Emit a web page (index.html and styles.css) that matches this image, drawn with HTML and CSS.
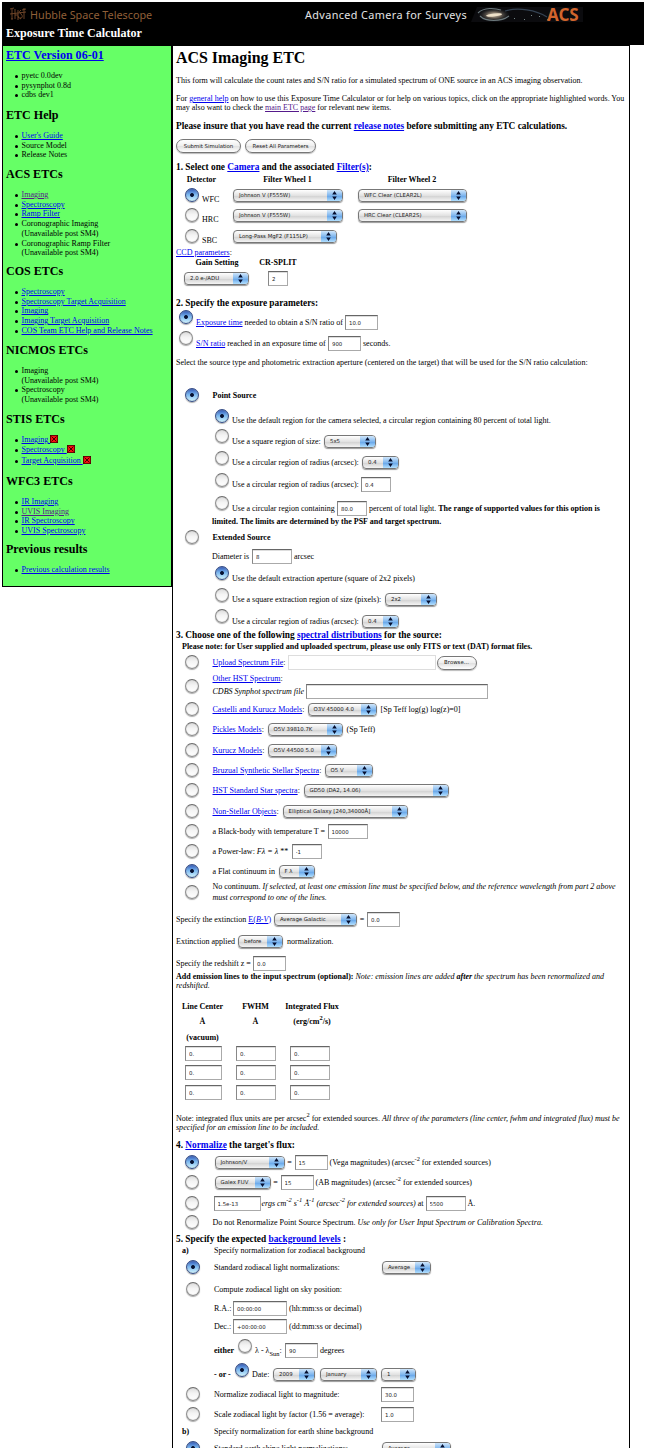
FILE: index.html
```html
<!DOCTYPE html>
<html lang="en">
<head>
<meta charset="utf-8">
<title>ACS Imaging ETC</title>
<link rel="stylesheet" href="styles.css">
</head>
<body>
<svg class="defs" width="0" height="0">
  <symbol id="arrows" viewBox="0 0 15 11"><path d="M7.5 1 9.8 4.4H5.2ZM7.5 10 9.8 6.6H5.2Z" fill="#061030"/></symbol>
  <symbol id="cross" viewBox="0 0 8 8"><path d="M0 0H8V8H0Z" fill="#300"/><path d="M.7.7H7.3V7.3H.7Z" fill="#f01010"/><path d="M1.5 1.5 6.5 6.5M6.5 1.5 1.5 6.5" stroke="#300" stroke-width=".9"/></symbol>
</svg>
<header class="top">
  <div class="brand">
    <svg class="hst" viewBox="0 0 18 15"><path d="M1 2 5 1M3 2V12M1 7 17 5M6 2V12M9 3V13M6 8H9M12 11Q9 12 9 9M12 3Q9 4 12 7T11 12M15 1V12M13 3 17 2M2 12H4" fill="none" stroke="#76492a" stroke-width=".9"/></svg>
    <span class="hubble">Hubble Space Telescope</span>
    <span class="camera">Advanced Camera for Surveys</span>
    <svg class="galaxy" viewBox="0 0 112 17">
      <defs><radialGradient id="core"><stop offset="0" stop-color="#fff8e8"/><stop offset=".35" stop-color="#c0ac94"/><stop offset="1" stop-color="#333b40" stop-opacity="0"/></radialGradient></defs>
      <path d="M6 1H112V16H0Z" fill="#0b0b0e"/>
      <ellipse cx="23" cy="9" rx="16" ry="7" fill="url(#core)" opacity=".65"/>
      <path d="M7 7C13 1 24 2 30 4M38 10C30 16 15 16 9 10" fill="none" stroke="#7f9094" stroke-width="1.1" opacity=".8"/>
      <ellipse cx="23" cy="9" rx="8" ry="1.6" fill="#eee0c8" transform="rotate(-6 23 9)"/>
      <path d="M34 5C47 1 65 4 76 11" fill="none" stroke="#344252" stroke-width="1.2"/>
      <path d="M43 12h1v1h-1zM53 13h1v1h-1zM60 9h1v1h-1zM68 10h1v1h-1zM76 13h1v1h-1z" fill="#788"/>
    </svg>
    <span class="acs">ACS</span>
  </div>
  <div class="calc">Exposure Time Calculator</div>
</header>
<div class="page">
<nav class="side">
  <section class="s60"><h2><a href="#">ETC Version 06-01</a></h2><ul><li>pyetc 0.0dev</li><li>pysynphot 0.8d</li><li>cdbs dev1</li></ul></section>
  <section class="s59"><h2>ETC Help</h2><ul><li><a href="#">User's Guide</a></li><li>Source Model</li><li>Release Notes</li></ul></section>
  <section class="s97"><h2>ACS ETCs</h2><ul><li><a class="seen" href="#">Imaging</a></li><li><a href="#">Spectroscopy</a></li><li><a href="#">Ramp Filter</a></li><li>Coronographic Imaging<br>(Unavailable post SM4)</li><li>Coronographic Ramp Filter<br>(Unavailable post SM4)</li></ul></section>
  <section class="s79"><h2>COS ETCs</h2><ul><li><a href="#">Spectroscopy</a></li><li><a href="#">Spectroscopy Target Acquisition</a></li><li><a href="#">Imaging</a></li><li><a href="#">Imaging Target Acquisition</a></li><li><a href="#">COS Team ETC Help and Release Notes</a></li></ul></section>
  <section class="s69"><h2>NICMOS ETCs</h2><ul><li>Imaging<br>(Unavailable post SM4)</li><li>Spectroscopy<br>(Unavailable post SM4)</li></ul></section>
  <section class="s62"><h2>STIS ETCs</h2><ul class="loose"><li><a href="#">Imaging <svg class="x"><use href="#cross"/></svg></a></li><li><a href="#">Spectroscopy <svg class="x"><use href="#cross"/></svg></a></li><li><a href="#">Target Acquisition <svg class="x"><use href="#cross"/></svg></a></li></ul></section>
  <section class="s68"><h2>WFC3 ETCs</h2><ul><li><a href="#">IR Imaging</a></li><li><a class="seen" href="#">UVIS Imaging</a></li><li><a href="#">IR Spectroscopy</a></li><li><a href="#">UVIS Spectroscopy</a></li></ul></section>
  <section class="s44"><h2>Previous results</h2><ul><li><a href="#">Previous calculation results</a></li></ul></section>
</nav>
<main class="main">
  <h1>ACS Imaging ETC</h1>
  <div class="row h20">This form will calculate the count rates and S/N ratio for a simulated spectrum of ONE source in an ACS imaging observation.</div>
  <div class="row h26"><p>For <a href="#">general help</a> on how to use this Exposure Time Calculator or for help on various topics, click on the appropriate highlighted words. You<br>may also want to check the <a class="seen" href="#">main ETC page</a> for relevant new items.</p></div>
  <div class="row h20 big"><p>Please insure that you have read the current <a href="#">release notes</a> before submitting any ETC calculations.</p></div>
  <div class="row h20 g4b"><button class="w65">Submit Simulation</button><button class="w71 ml4">Reset All Parameters</button></div>
  <div class="row h14 big"><p>1. Select one <a href="#">Camera</a> and the associated <a href="#">Filter(s)</a>:</p></div>
  <div class="row h10 th"><span class="w51 c">Detector</span><span class="ml5 w111 c">Filter Wheel 1</span><span class="ml14 w110 c">Filter Wheel 2</span></div>
  <div class="row h22"><input type="radio" class="det" checked><span class="w31 low">WFC</span><span class="sel w110">Johnson V (F555W)<svg><use href="#arrows"/></svg></span><span class="sel w109 ml15">WFC Clear (CLEAR2L)<svg><use href="#arrows"/></svg></span></div>
  <div class="row h19"><input type="radio" class="det"><span class="w31 low">HRC</span><span class="sel w110">Johnson V (F555W)<svg><use href="#arrows"/></svg></span><span class="sel w109 ml15">HRC Clear (CLEAR2S)<svg><use href="#arrows"/></svg></span></div>
  <div class="row h22"><input type="radio" class="det"><span class="w31 low">SBC</span><span class="sel w104">Long-Pass MgF2 (F115LP)<svg><use href="#arrows"/></svg></span></div>
  <div class="row h10"><a href="#">CCD parameters</a>:</div>
  <div class="row h10 th"><span class="w82 c">Gain Setting</span><span class="w40 c">CR-SPLIT</span></div>
  <div class="row h22"><span class="sel w65 ml8">2.0 e-/ADU<svg><use href="#arrows"/></svg></span><input class="w20 ml19" value="2"></div>
  <div class="row h12 g8 big">2. Specify the exposure parameters:</div>
  <div class="row h26"><input type="radio" class="in" checked><span class="w149"><a href="#">Exposure time</a> needed to obtain a S/N ratio of</span><input class="w33" value="10.0"></div>
  <div class="row h16"><input type="radio" class="in"><span class="w132"><a href="#">S/N ratio</a> reached in an exposure time of</span><input class="w33" value="900"><span class="ml2">seconds.</span></div>
  <div class="row h23">Select the source type and photometric extraction aperture (centered on the target) that will be used for the S/N ratio calculation:</div>
  <div class="row h21 g11"><input type="radio" class="out" checked><b>Point Source</b></div>
  <div class="nest g4">
    <div class="row h21"><input type="radio" class="in" checked>Use the default region for the camera selected, a circular region containing 80 percent of total light.</div>
    <div class="row h20"><input type="radio" class="in"><span class="w92">Use a square region of size:</span><span class="sel w52">5x5<svg><use href="#arrows"/></svg></span></div>
    <div class="row h23"><input type="radio" class="in"><span class="w130">Use a circular region of radius (arcsec):</span><span class="sel w37">0.4<svg><use href="#arrows"/></svg></span></div>
    <div class="row h21"><input type="radio" class="in"><span class="w129">Use a circular region of radius (arcsec):</span><input class="w30" value="0.4"></div>
    <div class="row h18 g4"><input type="radio" class="in"><span class="w105">Use a circular region containing</span><input class="w30" value="80.0"><span class="ml2">percent of total light. <b>The range of supported values for this option is</b></span></div>
    <div class="row h9"><b>limited. The limits are determined by the PSF and target spectrum.</b></div>
  </div>
  <div class="row h23"><input type="radio" class="out"><b>Extended Source</b></div>
  <div class="nest">
    <div class="row h14"><span class="w40">Diameter is</span><input class="w40" value="8"><span class="ml2">arcsec</span></div>
    <div class="row h22 g4"><input type="radio" class="in" checked>Use the default extraction aperture (square of 2x2 pixels)</div>
    <div class="row h21"><input type="radio" class="in"><span class="w153">Use a square extraction region of size (pixels):</span><span class="sel w52">2x2<svg><use href="#arrows"/></svg></span></div>
    <div class="row h16 g3"><input type="radio" class="in"><span class="w130">Use a circular region of radius (arcsec):</span><span class="sel w37">0.4<svg><use href="#arrows"/></svg></span></div>
  </div>
  <div class="row h11 g1 big"><p>3. Choose one of the following <a href="#">spectral distributions</a> for the source:</p></div>
  <div class="row h11 th"><span class="ml6">Please note: for User supplied and uploaded spectrum, please use only FITS or text (DAT) format files.</span></div>
  <div class="row h21"><input type="radio" class="out"><span class="w75"><a href="#">Upload Spectrum File</a>:</span><input class="w148 faint"><button class="w40 ml1">Browse...</button></div>
  <div class="row h26"><input type="radio" class="out"><div><div class="row h11"><a href="#">Other HST Spectrum</a>:</div><div class="row h15"><i class="w93">CDBS Synphot spectrum file</i><input class="w182"></div></div></div>
  <div class="row h21"><input type="radio" class="out"><span class="w95"><a href="#">Castelli and Kurucz Models</a>:</span><span class="sel w69">O3V 45000 4.0<svg><use href="#arrows"/></svg></span><span class="ml4">[Sp Teff log(g) log(z)=0]</span></div>
  <div class="row h19"><input type="radio" class="out"><span class="w55"><a href="#">Pickles Models</a>:</span><span class="sel w75">O5V 39810.7K<svg><use href="#arrows"/></svg></span><span class="ml4">(Sp Teff)</span></div>
  <div class="row h22"><input type="radio" class="out"><span class="w55"><a href="#">Kurucz Models</a>:</span><span class="sel w69">O5V 44500 5.0<svg><use href="#arrows"/></svg></span></div>
  <div class="row h19"><input type="radio" class="out"><span class="w112"><a href="#">Bruzual Synthetic Stellar Spectra</a>:</span><span class="sel w48">O5 V<svg><use href="#arrows"/></svg></span></div>
  <div class="row h21"><input type="radio" class="out"><span class="w91"><a href="#">HST Standard Star spectra</a>:</span><span class="sel w145">GD50 (DA2, 14.06)<svg><use href="#arrows"/></svg></span></div>
  <div class="row h20"><input type="radio" class="out"><span class="w70"><a href="#">Non-Stellar Objects</a>:</span><span class="sel w125">Elliptical Galaxy [240,34000Å]<svg><use href="#arrows"/></svg></span></div>
  <div class="row h20"><input type="radio" class="out"><span class="w115">a Black-body with temperature T =</span><input class="w40" value="10000"></div>
  <div class="row h21"><input type="radio" class="out"><span class="w79">a Power-law: <i>Fλ = λ</i> **</span><input class="w30" value="-1"></div>
  <div class="row h19"><input type="radio" class="out" checked><span class="w66">a Flat continuum in</span><span class="sel w36">F λ<svg><use href="#arrows"/></svg></span></div>
  <div class="row h23"><input type="radio" class="out"><p class="lh10">No continuum. <i>If selected, at least one emission line must be specified below, and the reference wavelength from part 2 above<br>must correspond to one of the lines.</i></p></div>
  <div class="row h30"><span class="w98">Specify the extinction <a href="#">E(<i>B-V</i>)</a></span><span class="sel w83">Average Galactic<svg><use href="#arrows"/></svg></span><span class="w10 c">=</span><input class="w33" value="0.0"></div>
  <div class="row h14"><span class="w62">Extinction applied</span><span class="sel w45">before<svg><use href="#arrows"/></svg></span><span class="ml4">normalization.</span></div>
  <div class="row h15 g8"><span class="w77">Specify the redshift z =</span><input class="w33" value="0.0"></div>
  <div class="row h19"><p><b>Add emission lines to the input spectrum (optional):</b> <i>Note: emission lines are added <b>after</b> the spectrum has been renormalized and<br>redshifted.</i></p></div>
  <div class="lines">
    <div class="row h14 th"><span class="w53 c">Line Center</span><span class="w53 c">FWHM</span><span class="w60 c">Integrated Flux</span></div>
    <div class="row h16 th"><span class="w53 c">Å</span><span class="w53 c">Å</span><span class="w60 c">(erg/cm<sup>2</sup>/s)</span></div>
    <div class="row h16 th"><span class="w53 c">(vacuum)</span></div>
    <div class="row h17"><input class="w37 ml9" value="0."><input class="w40 ml14" value="0."><input class="w40 ml14" value="0."></div>
    <div class="row h21"><input class="w37 ml9" value="0."><input class="w40 ml14" value="0."><input class="w40 ml14" value="0."></div>
    <div class="row h19"><input class="w37 ml9" value="0."><input class="w40 ml14" value="0."><input class="w40 ml14" value="0."></div>
  </div>
  <div class="row h29 g6"><p>Note: integrated flux units are per arcsec<sup>2</sup> for extended sources. <i>All three of the parameters (line center, fwhm and integrated flux) must be<br>specified for an emission line to be included.</i></p></div>
  <div class="row h17 big"><p>4. <a href="#">Normalize</a> the target's flux:</p></div>
  <div class="row h16"><input type="radio" class="out" checked><span class="sel w70 ml2">Johnson/V<svg><use href="#arrows"/></svg></span><span class="w10 c">=</span><input class="w33" value="15"><span class="ml2">(Vega magnitudes) (arcsec<sup>-2</sup> for extended sources)</span></div>
  <div class="row h24"><input type="radio" class="out"><span class="sel w56 ml2">Galex FUV<svg><use href="#arrows"/></svg></span><span class="w10 c">=</span><input class="w33" value="15"><span class="ml2">(AB magnitudes) (arcsec<sup>-2</sup> for extended sources)</span></div>
  <div class="row h18"><input type="radio" class="out"><input class="w47 ml1" value="1.5e-13"><span class="w164 ml1"><i>ergs cm<sup>-2</sup> s<sup>-1</sup> Å<sup>-1</sup> (arcsec<sup>-2</sup> for extended sources)</i> at</span><input class="w40" value="5500"><span class="ml2">Å.</span></div>
  <div class="row h21"><input type="radio" class="out"><p>Do not Renormalize Point Source Spectrum. <i>Use only for User Input Spectrum or Calibration Spectra.</i></p></div>
  <div class="row h12 big"><p>5. Specify the expected <a href="#">background levels</a> :</p></div>
  <div class="row h11"><b class="w32 ml6">a)</b>Specify normalization for zodiacal background</div>
  <div class="row h23"><input type="radio" class="bg" checked><span class="w168">Standard zodiacal light normalizations:</span><span class="sel w49">Average<svg><use href="#arrows"/></svg></span></div>
  <div class="row h21"><input type="radio" class="bg">Compute zodiacal light on sky position:</div>
  <div class="sky">
    <div class="row h17"><span class="w19">R.A.:</span><input class="w54" value="00:00:00"><span class="ml2">(hh:mm:ss or decimal)</span></div>
    <div class="row h19"><span class="w19">Dec.:</span><input class="w54" value="+00:00:00"><span class="ml2">(dd:mm:ss or decimal)</span></div>
    <div class="row h29"><b class="w21">either</b><input type="radio" class="in"><span class="w30">λ - λ<sub>Sun</sub>:</span><input class="w33" value="90"><span class="ml2">degrees</span></div>
    <div class="row h19"><b class="w18">- or -</b><input type="radio" class="in" checked><span class="w21">Date:</span><span class="sel w42">2009<svg><use href="#arrows"/></svg></span><span class="sel w57 ml5">January<svg><use href="#arrows"/></svg></span><span class="sel w35 ml4">1<svg><use href="#arrows"/></svg></span></div>
  </div>
  <div class="row h20"><input type="radio" class="bg"><span class="w167">Normalize zodiacal light to magnitude:</span><input class="w33" value="30.0"></div>
  <div class="row h21"><input type="radio" class="bg"><span class="w167">Scale zodiacal light by factor (1.56 = average):</span><input class="w33" value="1.0"></div>
  <div class="row h12"><b class="w32 ml6">b)</b>Specify normalization for earth shine background</div>
  <div class="row h22"><input type="radio" class="bg" checked><span class="w168">Standard earth shine light normalizations:</span><span class="sel w69">Average<svg><use href="#arrows"/></svg></span></div>
</main>
</div>
</body>
</html>
```
FILE: styles.css
```css
* { box-sizing: border-box; }
html { overflow: hidden; }
body {
  margin: 0;
  padding: 2px 0 0 2px;
  width: 645px;
  height: 1448px;
  overflow: hidden;
  background: #fff;
  color: #000;
  font: 8.02px/9px "Liberation Serif", serif;
}
.defs { display: block; height: 0; }
a { color: #00e; text-decoration: underline; }
a.seen { color: #551a8b; }
h1, h2, p, ul { margin: 0; padding: 0; }

.top { width: 642px; height: 43px; background: #000; }
.brand { display: flex; align-items: center; height: 25px; padding-left: 7px; white-space: nowrap; }
.brand > * { flex: none; }
.hst { width: 18px; height: 15px; }
.hubble { width: 278px; padding-left: 3px; color: #8f5f38; font: 10.8px/14px "Noto Sans", sans-serif; }
.camera { width: 166px; color: #e4e4e4; font: 10.8px/14px "Noto Sans", sans-serif; letter-spacing: .4px; }
.galaxy { width: 112px; height: 17px; }
.acs { margin-left: -36px; color: #d2652d; font: bold 17px/17px "Noto Sans", sans-serif; z-index: 1; }
.calc { padding-left: 4px; color: #fff; font-size: 12.05px; font-weight: bold; line-height: 12px; }

.page { display: flex; align-items: flex-start; }
.side { width: 170px; height: 542px; padding: 2px 0 0 3px; border: 1px solid #000; background: #6f6; white-space: nowrap; }
.side h2 { margin-bottom: 9px; font-size: 12.05px; line-height: 15px; height: 14px; }
.side ul { list-style: none; line-height: 9.7px; }
.side li { position: relative; padding-left: 15.5px; }
.side li::before { content: ""; position: absolute; left: 9px; top: 4px; width: 3px; height: 3px; border-radius: 50%; background: #000; }
.side .loose { line-height: 10.3px; }
.x { width: 8px; height: 8px; vertical-align: -1px; }
.s60 { height: 60px; } .s59 { height: 59px; } .s97 { height: 97px; } .s79 { height: 79px; }
.s69 { height: 69px; } .s62 { height: 62px; } .s68 { height: 68px; } .s44 { height: 44px; }

.main { width: 458px; height: 1420px; padding-left: 3px; border: solid #000; border-width: 1px 1px 0; white-space: nowrap; }
h1 { font-size: 15.95px; line-height: 24px; }
.row { display: flex; align-items: center; white-space: nowrap; }
.row > * { flex: none; }
.big { font-size: 9.33px; font-weight: bold; }
.th { font-weight: bold; }
.nest { margin-left: 36px; }
.sky { margin-left: 38px; }
.lines { margin-top: 9px; }
.c { text-align: center; }
.low { padding-top: 8px; }
.lh10 { line-height: 10.4px; }
sup, sub { font-size: 6.4px; line-height: 0; }
sup { vertical-align: 4px; }
sub { vertical-align: -3px; }

input, button, .sel { margin: 0; font: 5.4px/11px "DejaVu Sans", sans-serif; color: #222; }
input { height: 15px; padding: 1px 2px 0 3px; border: 1px solid #aaa; border-top: 1px solid #666; border-left-color: #888; border-radius: 0; background: #fff; box-shadow: inset 0 1px #ddd; outline: 0; }
input.faint { border-color: #ddd; box-shadow: none; }
input[type=radio] {
  appearance: none;
  width: 14px;
  height: 14px;
  padding: 0;
  border: 1px solid #8c8c8c;
  border-top-color: #6c6c6c;
  border-radius: 50%;
  background: linear-gradient(#ddd, #f4f4f4 45%, #fff);
  box-shadow: 0 1px 1px #aaa, inset 0 0 1px #aaa;
}
input[type=radio]:checked { border-color: #344c86; background: radial-gradient(circle, #061030 0 1.5px, transparent 2.3px), linear-gradient(#3058b8, #79b5ee 45%, #d2f6ff); }
input.out { margin: 0 13.5px 1px 9px; }
input.bg { margin: 0 14px 1px 10px; }
input.in { margin: 0 3px 10px; }
input.det { margin: 0 3px 1px 9px; }
button { height: 14px; padding: 0; border: 1px solid #777; border-radius: 7px; background: linear-gradient(#fff, #eee 50%, #e0e0e0 52%, #fff); box-shadow: 0 1px 1px #bbb; }
.sel { display: flex; justify-content: space-between; height: 13px; padding-left: 5px; overflow: hidden; border: 1px solid #777; border-radius: 4px; background: linear-gradient(#fff, #e2e2e2 50%, #d0d0d0 52%, #f4f4f4); box-shadow: 0 1px 1px #999; }
.sel svg { flex: none; width: 15px; height: 11px; background: linear-gradient(#cfe6fb, #7fb6ee 50%, #62a2e8 52%, #b2e0ff); }

.h9 { height: 9px; } .h10 { height: 10px; } .h11 { height: 11px; } .h12 { height: 12px; } .h14 { height: 14px; }
.h15 { height: 15px; } .h16 { height: 16px; } .h17 { height: 17px; } .h18 { height: 18px; } .h19 { height: 19px; }
.h20 { height: 20px; } .h21 { height: 21px; } .h22 { height: 22px; } .h23 { height: 23px; } .h24 { height: 24px; }
.h26 { height: 26px; } .h29 { height: 29px; } .h30 { height: 30px; }
.g1 { margin-top: 1px; } .g3 { margin-top: 3px; } .g4 { margin-top: 4px; } .g4b { margin-bottom: 4px; }
.g6 { margin-top: 6px; } .g8 { margin-top: 8px; } .g11 { margin-top: 11px; }
.ml1 { margin-left: 1px; } .ml2 { margin-left: 2px; } .ml4 { margin-left: 4px; } .ml5 { margin-left: 5px; }
.ml6 { margin-left: 6px; } .ml8 { margin-left: 8px; } .ml9 { margin-left: 9px; } .ml14 { margin-left: 14px; }
.ml15 { margin-left: 15px; } .ml19 { margin-left: 19px; }
.w10 { width: 10px; } .w18 { width: 18px; } .w19 { width: 19px; } .w20 { width: 20px; } .w21 { width: 21px; }
.w30 { width: 30px; } .w31 { width: 31px; } .w32 { width: 32px; } .w33 { width: 33px; } .w35 { width: 35px; }
.w36 { width: 36px; } .w37 { width: 37px; } .w40 { width: 40px; } .w42 { width: 42px; } .w45 { width: 45px; }
.w47 { width: 47px; } .w48 { width: 48px; } .w49 { width: 49px; } .w51 { width: 51px; } .w52 { width: 52px; }
.w53 { width: 53px; } .w54 { width: 54px; } .w55 { width: 55px; } .w56 { width: 56px; } .w57 { width: 57px; }
.w60 { width: 60px; } .w62 { width: 62px; } .w65 { width: 65px; } .w66 { width: 66px; } .w69 { width: 69px; }
.w70 { width: 70px; } .w71 { width: 71px; } .w75 { width: 75px; } .w77 { width: 77px; } .w79 { width: 79px; }
.w82 { width: 82px; } .w83 { width: 83px; } .w91 { width: 91px; } .w92 { width: 92px; } .w93 { width: 93px; }
.w95 { width: 95px; } .w98 { width: 98px; } .w104 { width: 104px; } .w105 { width: 105px; } .w109 { width: 109px; }
.w110 { width: 110px; } .w111 { width: 111px; } .w112 { width: 112px; } .w115 { width: 115px; } .w125 { width: 125px; }
.w129 { width: 129px; } .w130 { width: 130px; } .w132 { width: 132px; } .w145 { width: 145px; } .w148 { width: 148px; }
.w149 { width: 149px; } .w153 { width: 153px; } .w164 { width: 164px; } .w167 { width: 167px; } .w168 { width: 168px; }
.w182 { width: 182px; }
```
